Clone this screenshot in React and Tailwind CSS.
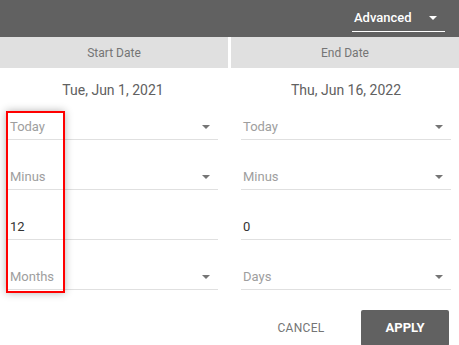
import React from "react";

const Arrow = ({ color = "#757575" }) => (
  <svg width="8" height="4" viewBox="0 0 8 4" className="shrink-0">
    <path d="M0 0 L8 0 L4 4 Z" fill={color} />
  </svg>
);

const SelectField = ({ label, first }) => (
  <div className={`flex items-end justify-between h-[28px] border-b border-[#e0e0e0] pl-[2px] pr-[8px] pb-[4px] ${first ? "" : "mt-[22px]"}`}>
    <span className="text-[13px] leading-[16px] text-[#9e9e9e]">{label}</span>
    <div className="mb-[6px]">
      <Arrow />
    </div>
  </div>
);

const InputField = ({ value }) => (
  <div className="flex items-end h-[28px] border-b border-[#e0e0e0] pl-[2px] pb-[4px] mt-[22px]">
    <span className="text-[13px] leading-[16px] text-[#333333]">{value}</span>
  </div>
);

const Column = ({ date, a, b, n, unit, cls }) => (
  <div className={cls}>
    <div className="h-[44px] flex items-center justify-center text-[14px] text-[#616161]">{date}</div>
    <SelectField label={a} first />
    <SelectField label={b} />
    <InputField value={n} />
    <SelectField label={unit} />
  </div>
);

export default function App() {
  return (
    <div
      className="relative w-[459px] h-[345px] overflow-hidden bg-white"
      style={{ fontFamily: "Roboto, 'Liberation Sans', sans-serif" }}
    >
      <div className="h-[37px] bg-[#616161] flex justify-end pr-[14px]">
        <div className="mt-[8px] h-[24px] w-[93px] border-b border-white flex items-start justify-between pl-[2px] pr-[8px] pt-[2px]">
          <span className="text-[13px] leading-[16px] text-white font-medium">Advanced</span>
          <div className="mt-[6px]">
            <svg width="8" height="4" viewBox="0 0 8 4">
              <path d="M0 0 L8 0 L4 4 Z" fill="#ffffff" />
            </svg>
          </div>
        </div>
      </div>
      <div className="grid grid-cols-2 gap-[3px] h-[31px]">
        <div className="bg-[#e0e0e0] flex items-center justify-center text-[12px] text-[#757575]">Start Date</div>
        <div className="bg-[#e0e0e0] flex items-center justify-center text-[12px] text-[#757575]">End Date</div>
      </div>
      <div className="grid grid-cols-2 gap-[3px]">
        <Column cls="pl-[8px] pr-[10px]" date="Tue, Jun 1, 2021" a="Today" b="Minus" n="12" unit="Months" />
        <Column cls="pl-[10px] pr-[8px]" date="Thu, Jun 16, 2022" a="Today" b="Minus" n="0" unit="Days" />
      </div>
      <div className="flex justify-end gap-[16px] pr-[10px] mt-[20px]">
        <button className="w-[88px] h-[36px] text-[12px] tracking-[0.3px] text-[#757575]">CANCEL</button>
        <button className="w-[88px] h-[36px] rounded-[2px] bg-[#616161] text-white text-[13px] font-bold">APPLY</button>
      </div>
      <div className="absolute left-[6px] top-[111px] w-[59px] h-[182px] border-2 border-[#ff0000] shadow-[0_0_8px_rgba(0,0,0,0.3)]" />
    </div>
  );
}
